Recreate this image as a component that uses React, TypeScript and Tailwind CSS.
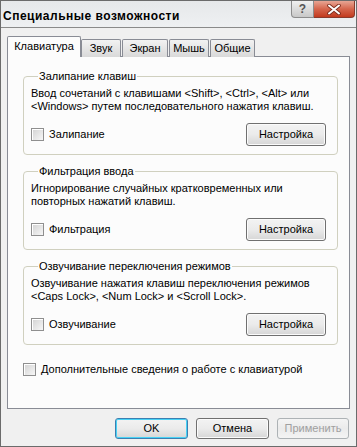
import type { ReactNode } from 'react';

function Check({ label }: { label: string }) {
  return (
    <label className="flex items-center gap-[5px] leading-[13px]">
      <span className="w-[13px] h-[13px] border border-[#8f8f8f] bg-gradient-to-br from-[#d2d2d2] to-[#f7f7f7] shadow-[inset_1px_1px_0_#ffffff]" />
      <span>{label}</span>
    </label>
  );
}

function Btn({ children, kind = 'normal', w = 'w-[80px]', h = 'h-[23px]' }: { children: ReactNode; kind?: 'normal' | 'default' | 'disabled'; w?: string; h?: string }) {
  const look =
    kind === 'default'
      ? 'border-[#3c7fb1] shadow-[inset_0_0_0_1px_#48d2f5] text-black'
      : kind === 'disabled'
        ? 'border-[#adb2b5] text-[#a0a0a0] from-[#f4f4f4] to-[#f4f4f4]'
        : 'border-[#707070] shadow-[inset_0_0_0_1px_#fbfbfb] text-black';
  return (
    <div className={`${w} ${h} flex items-center justify-center rounded-[3px] border bg-gradient-to-b from-[#f3f3f3] via-[#ebebeb] to-[#d6d6d6] ${look}`}>
      {children}
    </div>
  );
}

function Group({ title, lines, check }: { title: string; lines: string[]; check: string }) {
  return (
    <fieldset className="border border-[#d0d0bf] rounded-[4px] pl-[7px] pr-[11px] pb-[8px]">
      <legend className="ml-[7px] px-[1px] leading-[12px]">{title}</legend>
      <div className="mt-[5px] leading-[13px]">
        {lines.map((l) => (
          <div key={l}>{l}</div>
        ))}
      </div>
      <div className="mt-[10px] flex items-center justify-between">
        <Check label={check} />
        <Btn>Настройка</Btn>
      </div>
    </fieldset>
  );
}

export default function App() {
  const tabs = [
    { name: 'Звук', w: 'w-[40px]' },
    { name: 'Экран', w: 'w-[46px]' },
    { name: 'Мышь', w: 'w-[40px]' },
    { name: 'Общие', w: 'w-[45px]' },
  ];
  return (
    <div className="w-[357px] h-[447px] flex flex-col border border-[#6b6b6b] bg-[#f0f0f0] text-[11px] text-black font-['Liberation_Sans',sans-serif] overflow-hidden">
      <div className="h-[27px] shrink-0 flex items-start justify-between bg-gradient-to-b from-[#e6e8ea] to-[#eef0f2] border-b border-[#8a8a8a]">
        <div className="pl-[2px] pt-[8px] text-[12px] tracking-[0.5px] font-bold leading-[14px]">Специальные возможности</div>
        <div className="flex mr-[1px]">
          <div className="w-[23px] h-[17px] flex items-center justify-center rounded-bl-[4px] border border-t-0 border-[#8c8c8c] bg-gradient-to-b from-[#f0f0f0] to-[#c8c8c8] text-[12px] font-bold text-[#555555]">
            ?
          </div>
          <div className="w-[41px] h-[17px] flex items-center justify-center rounded-br-[4px] border border-t-0 border-l-0 border-[#8a3a2c] bg-gradient-to-b from-[#e7a594] via-[#d5654c] to-[#c2391c]">
            <svg width="14" height="11" viewBox="0 0 14 11">
              <path d="M2 1.5 L12 9.5 M12 1.5 L2 9.5" stroke="#7a2a1a" strokeWidth="3.6" strokeLinecap="round" />
              <path d="M2 1.5 L12 9.5 M12 1.5 L2 9.5" stroke="#ffffff" strokeWidth="2" strokeLinecap="round" />
            </svg>
          </div>
        </div>
      </div>

      <div className="flex-1 flex flex-col px-[6px] pt-[8px]">
        <div className="flex items-end h-[21px] relative z-10">
          <div className="w-[74px] h-[21px] flex items-center justify-center bg-[#fcfcfc] border border-b-0 border-[#898c95] rounded-t-[2px] pb-[1px]">
            Клавиатура
          </div>
          {tabs.map((t) => (
            <div
              key={t.name}
              className={`${t.w} h-[18px] mr-[1px] flex items-center justify-center border border-b-0 border-[#898c95] rounded-t-[2px] bg-gradient-to-b from-[#f2f2f2] to-[#d9d9d9]`}
            >
              {t.name}
            </div>
          ))}
        </div>
        <div className="-mt-px h-[353px] border border-[#898c95] bg-[#fcfcfc] pt-[13px] pl-[15px] pr-[11px] flex flex-col gap-[10px]">
          <Group
            title="Залипание клавиш"
            lines={['Ввод сочетаний с клавишами <Shift>, <Ctrl>, <Alt> или', '<Windows> путем последовательного нажатия клавиш.']}
            check="Залипание"
          />
          <Group
            title="Фильтрация ввода"
            lines={['Игнорирование случайных кратковременных или', 'повторных нажатий клавиш.']}
            check="Фильтрация"
          />
          <Group
            title="Озвучивание переключения режимов"
            lines={['Озвучивание нажатия клавиш переключения режимов', '<Caps Lock>, <Num Lock> и <Scroll Lock>.']}
            check="Озвучивание"
          />
          <div className="mt-[8px]">
            <Check label="Дополнительные сведения о работе с клавиатурой" />
          </div>
        </div>
        <div className="flex justify-end gap-[8px] mt-[9px] pr-[1px]">
          <Btn kind="default" w="w-[73px]" h="h-[21px]">OK</Btn>
          <Btn w="w-[73px]" h="h-[21px]">Отмена</Btn>
          <Btn kind="disabled" w="w-[72px]" h="h-[21px]">Применить</Btn>
        </div>
      </div>
    </div>
  );
}
